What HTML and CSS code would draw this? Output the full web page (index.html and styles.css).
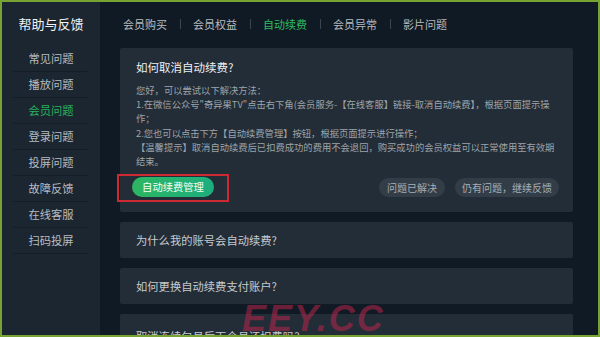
FILE: index.html
```html
<!DOCTYPE html>
<html lang="zh-CN">
<head>
<meta charset="utf-8">
<title>帮助与反馈</title>
<link rel="stylesheet" href="styles.css">
</head>
<body>
<div class="app">
  <aside class="sidebar">
    <div class="side-title">帮助与反馈</div>
    <ul class="side-list">
      <li class="side-item">常见问题</li>
      <li class="side-item">播放问题</li>
      <li class="side-item active">会员问题</li>
      <li class="side-item">登录问题</li>
      <li class="side-item">投屏问题</li>
      <li class="side-item">故障反馈</li>
      <li class="side-item">在线客服</li>
      <li class="side-item">扫码投屏</li>
    </ul>
  </aside>
  <main class="main">
    <nav class="tabs">
      <span class="tab">会员购买</span><span class="sep"></span>
      <span class="tab">会员权益</span><span class="sep"></span>
      <span class="tab active">自动续费</span><span class="sep"></span>
      <span class="tab">会员异常</span><span class="sep"></span>
      <span class="tab">影片问题</span>
    </nav>
    <section class="card open">
      <h2 class="card-title">如何取消自动续费?</h2>
      <div class="card-body">
        <p>您好，可以尝试以下解决方法：</p>
        <p>1.在微信公众号"奇异果TV"点击右下角(会员服务-【在线客服】链接-取消自动续费】，根据页面提示操作；</p>
        <p>2.您也可以点击下方【自动续费管理】按钮，根据页面提示进行操作；</p>
        <p>【温馨提示】取消自动续费后已扣费成功的费用不会退回，购买成功的会员权益可以正常使用至有效期结束。</p>
      </div>
      <div class="actions">
        <span class="btn-primary">自动续费管理</span>
        <div class="actions-right">
          <span class="btn-ghost">问题已解决</span>
          <span class="btn-ghost">仍有问题，继续反馈</span>
        </div>
      </div>
      <div class="highlight"></div>
    </section>
    <section class="card row"><span class="row-title">为什么我的账号会自动续费?</span></section>
    <section class="card row"><span class="row-title">如何更换自动续费支付账户?</span></section>
    <section class="card row"><span class="row-title">取消连续包月后下个月还扣费吗?</span></section>
  </main>
  <div class="watermark">EEY.CC</div>
</div>
</body>
</html>
```
FILE: styles.css
```css
* { box-sizing: border-box; }
html, body { margin: 0; padding: 0; }
body {
  width: 600px;
  height: 337px;
  overflow: hidden;
  background: #76a332;
  font-family: "Noto Sans CJK SC", "Noto Sans", sans-serif;
}
.app {
  position: relative;
  width: 600px;
  height: 337px;
  border: 2px solid #76a332;
  display: flex;
  overflow: hidden;
  background: #0f1a24;
}
.sidebar {
  width: 98px;
  flex: none;
  background: #1b2630;
}
.side-title {
  padding-top: 13px;
  height: 44px;
  line-height: 18px;
  font-size: 13px;
  color: #f2f3f4;
  text-align: center;
}
.side-list {
  list-style: none;
  margin: 0 11px 0 11px;
  padding: 0;
}
.side-item {
  height: 26px;
  line-height: 25px;
  font-size: 11.3px;
  color: #b6bbc0;
  text-align: center;
  border-bottom: 1px solid #141d26;
}
.side-item.active { color: #27b45d; }
.main {
  flex: 1;
  padding: 0 25px 0 20px;
  overflow: hidden;
}
.tabs {
  display: flex;
  align-items: center;
  height: 46px;
  padding: 0 0 2px 3px;
  font-size: 11px;
  color: #b7bbc0;
}
.tab { line-height: 18px; white-space: nowrap; }
.tab.active { color: #2fba63; }
.sep {
  width: 1px;
  height: 10px;
  margin: 0 12.5px;
  background: #3a444e;
}
.card {
  background: #232d37;
  border-radius: 2px;
  margin-bottom: 10px;
}
.card.open {
  position: relative;
  padding: 12px 16px 15px 16px;
}
.card-title {
  margin: 0;
  font-size: 11.5px;
  font-weight: normal;
  line-height: 14px;
  color: #eef0f2;
}
.card-body {
  margin-top: 9px;
  font-size: 9.3px;
  line-height: 14.2px;
  color: #9ea4aa;
}
.card-body p { margin: 0; }
.actions {
  margin-top: 9px;
  display: flex;
  justify-content: space-between;
  align-items: center;
  margin-left: -4px;
  margin-right: -2px;
}
.btn-primary {
  height: 20px;
  width: 82px;
  border-radius: 10px;
  background: linear-gradient(90deg, #2cb662, #1eae7e);
  color: #f2fff6;
  font-size: 10.3px;
  line-height: 20px;
  text-align: center;
}
.actions-right { display: flex; gap: 10px; }
.btn-ghost {
  height: 19px;
  line-height: 19px;
  border-radius: 10px;
  background: #323d47;
  color: #a8aeb4;
  font-size: 10px;
  padding: 0 8px;
  white-space: nowrap;
}
.btn-ghost + .btn-ghost { padding: 0 7px; }
.highlight {
  position: absolute;
  left: -3px;
  top: 126px;
  width: 112px;
  height: 28px;
  border: 2px solid #cc2a30;
}
.card.row {
  height: 36px;
  padding: 0 16px;
  display: flex;
  align-items: center;
  margin-bottom: 10px;
}
.card.row:last-child { height: 40px; padding-top: 3px; }
.row-title {
  font-size: 11.3px;
  color: #c6cace;
}
.watermark {
  position: absolute;
  left: 240px;
  top: 296px;
  font-family: "Liberation Sans", sans-serif;
  font-weight: bold;
  font-style: italic;
  font-size: 36px;
  letter-spacing: 2px;
  color: rgba(190, 36, 74, 0.55);
  pointer-events: none;
}
```
